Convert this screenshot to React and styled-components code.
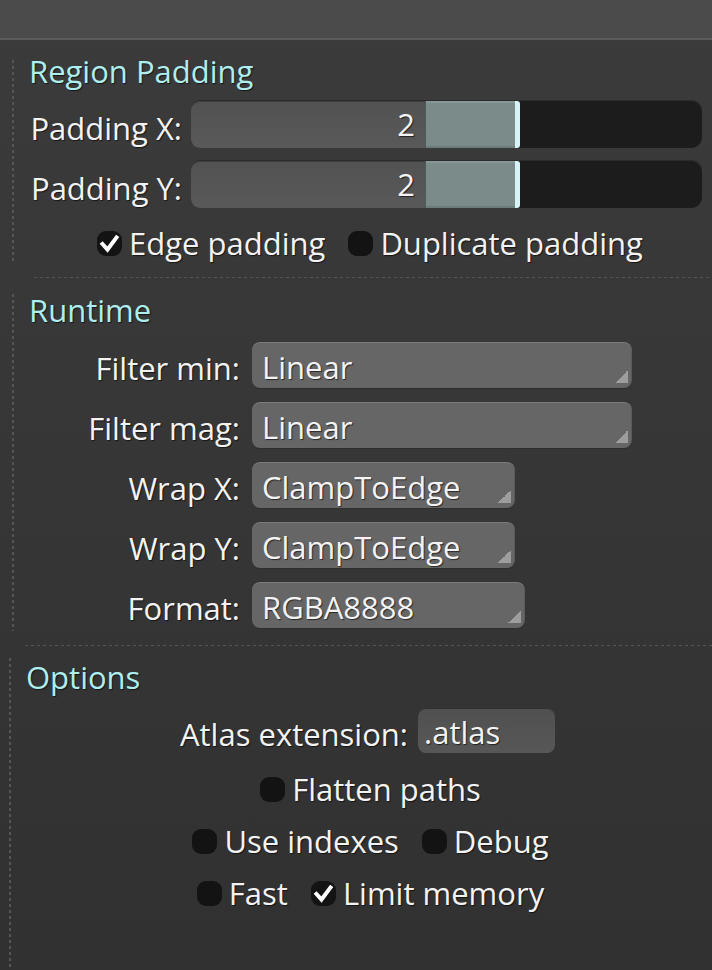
import React from 'react'
import styled, { createGlobalStyle } from 'styled-components'

const GlobalStyle = createGlobalStyle`
  html, body {
    margin: 0;
    padding: 0;
    background: #353535;
  }
  body {
    font-family: 'Open Sans', 'Noto Sans', sans-serif;
  }
`

const Window = styled.div`
  width: 712px;
  height: 970px;
  overflow: hidden;
  display: flex;
  flex-direction: column;
  background: linear-gradient(#3b3b3b, #313131);
  color: #f3f3f3;
  font-size: 31px;
  text-shadow: 1px 1px 1px rgba(0, 0, 0, 0.6);
`

const TitleBar = styled.div`
  flex: none;
  height: 38px;
  background: #4b4b4b;
  border-bottom: 2px solid #5c5c5c;
`

const Section = styled.section`
  margin: ${p => p.$top}px 0 0 ${p => p.$indent}px;
  padding: 0 10px ${p => p.$bottom || 0}px 0;
  display: flex;
  flex-direction: column;
  background-image: repeating-linear-gradient(to bottom, #555555 0 3px, transparent 3px 6px);
  background-size: 2px calc(100% - ${p => p.$skip || 0}px);
  background-position: 0 ${p => p.$skip || 0}px;
  background-repeat: no-repeat;
  flex: ${p => (p.$grow ? 1 : 'none')};
`

const Divider = styled.div`
  flex: none;
  height: 1px;
  margin: ${p => p.$top}px 0 0 ${p => p.$left}px;
  background: repeating-linear-gradient(to right, #545454 0 3px, transparent 3px 6px);
`

const Heading = styled.div`
  height: 36px;
  line-height: 38px;
  padding-left: 17px;
  color: #aeeeee;
`

const FieldRow = styled.div`
  display: flex;
  align-items: center;
  justify-content: ${p => (p.$center ? 'center' : 'flex-start')};
  padding-left: ${p => p.$pad || 0}px;
  gap: ${p => p.$gap}px;
  height: ${p => p.$h}px;
  margin-top: ${p => p.$top}px;
`

const Label = styled.div`
  flex: none;
  width: ${p => (p.$w ? `${p.$w}px` : 'auto')};
  text-align: right;
  white-space: nowrap;
  padding-top: ${p => p.$drop || 0}px;
`

const SliderBox = styled.div`
  flex: 1;
  display: flex;
  height: 47px;
  border-radius: 9px;
  box-shadow: 0 -1px 0 #2b2b2b;
`

const SliderValue = styled.div`
  flex: none;
  width: 234px;
  height: 47px;
  line-height: 47px;
  box-sizing: border-box;
  padding-right: 10px;
  text-align: right;
  background: linear-gradient(#525252, #595959);
  border-radius: 9px 0 0 9px;
  box-shadow: inset 0 1px 0 #3e3e3e;
`

const SliderTrack = styled.div`
  flex: 1;
  display: flex;
  background: #1c1c1c;
  border-radius: 0 11px 11px 0;
  overflow: hidden;
`

const SliderFill = styled.div`
  flex: none;
  background: linear-gradient(#869896 0 2px, #7a8b89 2px calc(100% - 2px), #6c7c7a calc(100% - 2px));
  box-shadow: inset 1px 0 0 #4c5a59;
`

const SliderKnob = styled.div`
  flex: none;
  width: 5px;
  background: #d6f3f7;
  border-radius: 0 3px 3px 0;
`

const Select = styled.div`
  flex: none;
  width: ${p => p.$w}px;
  height: 46px;
  line-height: 50px;
  overflow: hidden;
  box-sizing: border-box;
  padding-left: 10px;
  border-radius: 8px;
  background-color: #666666;
  background-image: linear-gradient(135deg, transparent 50%, #9d9d9d 50%);
  background-size: 13px 13px;
  background-position: right 4px bottom 5px;
  background-repeat: no-repeat;
  box-shadow: inset 0 1px 0 #7b7b7b, inset -1px 0 0 #5a5a5a, 0 1px 0 #2e2e2e;
  white-space: nowrap;
`

const TextInput = styled.div`
  flex: none;
  width: 137px;
  height: 45px;
  line-height: 48px;
  overflow: hidden;
  box-sizing: border-box;
  padding-left: 6px;
  border-radius: 8px;
  background: linear-gradient(#505050, #575757);
  box-shadow: inset 0 1px 0 #2f2f2f;
`

const CheckRow = styled.div`
  display: flex;
  justify-content: center;
  align-items: center;
  gap: 23px;
  height: 36px;
  margin-top: ${p => p.$top}px;
  padding-left: ${p => p.$pad}px;
`

const Check = styled.label`
  display: flex;
  align-items: center;
  gap: 7px;
  white-space: nowrap;
`

const Box = styled.span`
  flex: none;
  width: 25px;
  height: 25px;
  border-radius: 9px;
  background: #131313;
  display: flex;
  align-items: center;
  justify-content: center;
`

const CheckBox = ({ checked, children }) => (
  <Check>
    <Box>
      {checked && (
        <svg width="25" height="25" viewBox="0 0 25 25">
          <path d="M5.5 13 L10.5 18.5 L19.5 6.5" fill="none" stroke="#ffffff" strokeWidth="4" strokeLinecap="square" strokeLinejoin="miter" />
        </svg>
      )}
    </Box>
    <span>{children}</span>
  </Check>
)

const Slider = ({ value, max }) => (
  <SliderBox>
    <SliderValue>{value}</SliderValue>
    <SliderTrack>
      <SliderFill style={{ width: `${(value / max) * 100}%` }} />
      <SliderKnob />
    </SliderTrack>
  </SliderBox>
)

const runtime = [
  { label: 'Filter min:', value: 'Linear', width: 380 },
  { label: 'Filter mag:', value: 'Linear', width: 380 },
  { label: 'Wrap X:', value: 'ClampToEdge', width: 263 },
  { label: 'Wrap Y:', value: 'ClampToEdge', width: 263 },
  { label: 'Format:', value: 'RGBA8888', width: 273 },
]

export default function App() {
  return (
    <Window>
      <GlobalStyle />
      <TitleBar />

      <Section $top={12} $indent={12} $skip={8}>
        <Heading>Region Padding</Heading>
        <FieldRow $h={47} $top={13} $gap={9}>
          <Label $w={170} $drop={6}>Padding X:</Label>
          <Slider value={2} max={6.15} />
        </FieldRow>
        <FieldRow $h={47} $top={13} $gap={9}>
          <Label $w={170} $drop={6}>Padding Y:</Label>
          <Slider value={2} max={6.15} />
        </FieldRow>
        <CheckRow $top={17} $pad={26}>
          <CheckBox checked>Edge padding</CheckBox>
          <CheckBox>Duplicate padding</CheckBox>
        </CheckRow>
      </Section>

      <Divider $top={16} $left={34} />

      <Section $top={13} $indent={12} $skip={3} $bottom={3}>
        <Heading>Runtime</Heading>
        {runtime.map((r, i) => (
          <FieldRow key={r.label} $h={46} $top={i === 0 ? 15 : 14} $gap={12}>
            <Label $w={228} $drop={5}>{r.label}</Label>
            <Select $w={r.width}>{r.value}</Select>
          </FieldRow>
        ))}
      </Section>

      <Divider $top={14} $left={25} />

      <Section $top={12} $indent={9} $grow>
        <Heading>Options</Heading>
        <FieldRow $h={45} $top={14} $gap={10} $center $pad={24}>
          <Label $drop={7}>Atlas extension:</Label>
          <TextInput>.atlas</TextInput>
        </FieldRow>
        <CheckRow $top={18} $pad={30}>
          <CheckBox>Flatten paths</CheckBox>
        </CheckRow>
        <CheckRow $top={16} $pad={30}>
          <CheckBox>Use indexes</CheckBox>
          <CheckBox>Debug</CheckBox>
        </CheckRow>
        <CheckRow $top={16} $pad={30}>
          <CheckBox>Fast</CheckBox>
          <CheckBox checked>Limit memory</CheckBox>
        </CheckRow>
      </Section>
    </Window>
  )
}
